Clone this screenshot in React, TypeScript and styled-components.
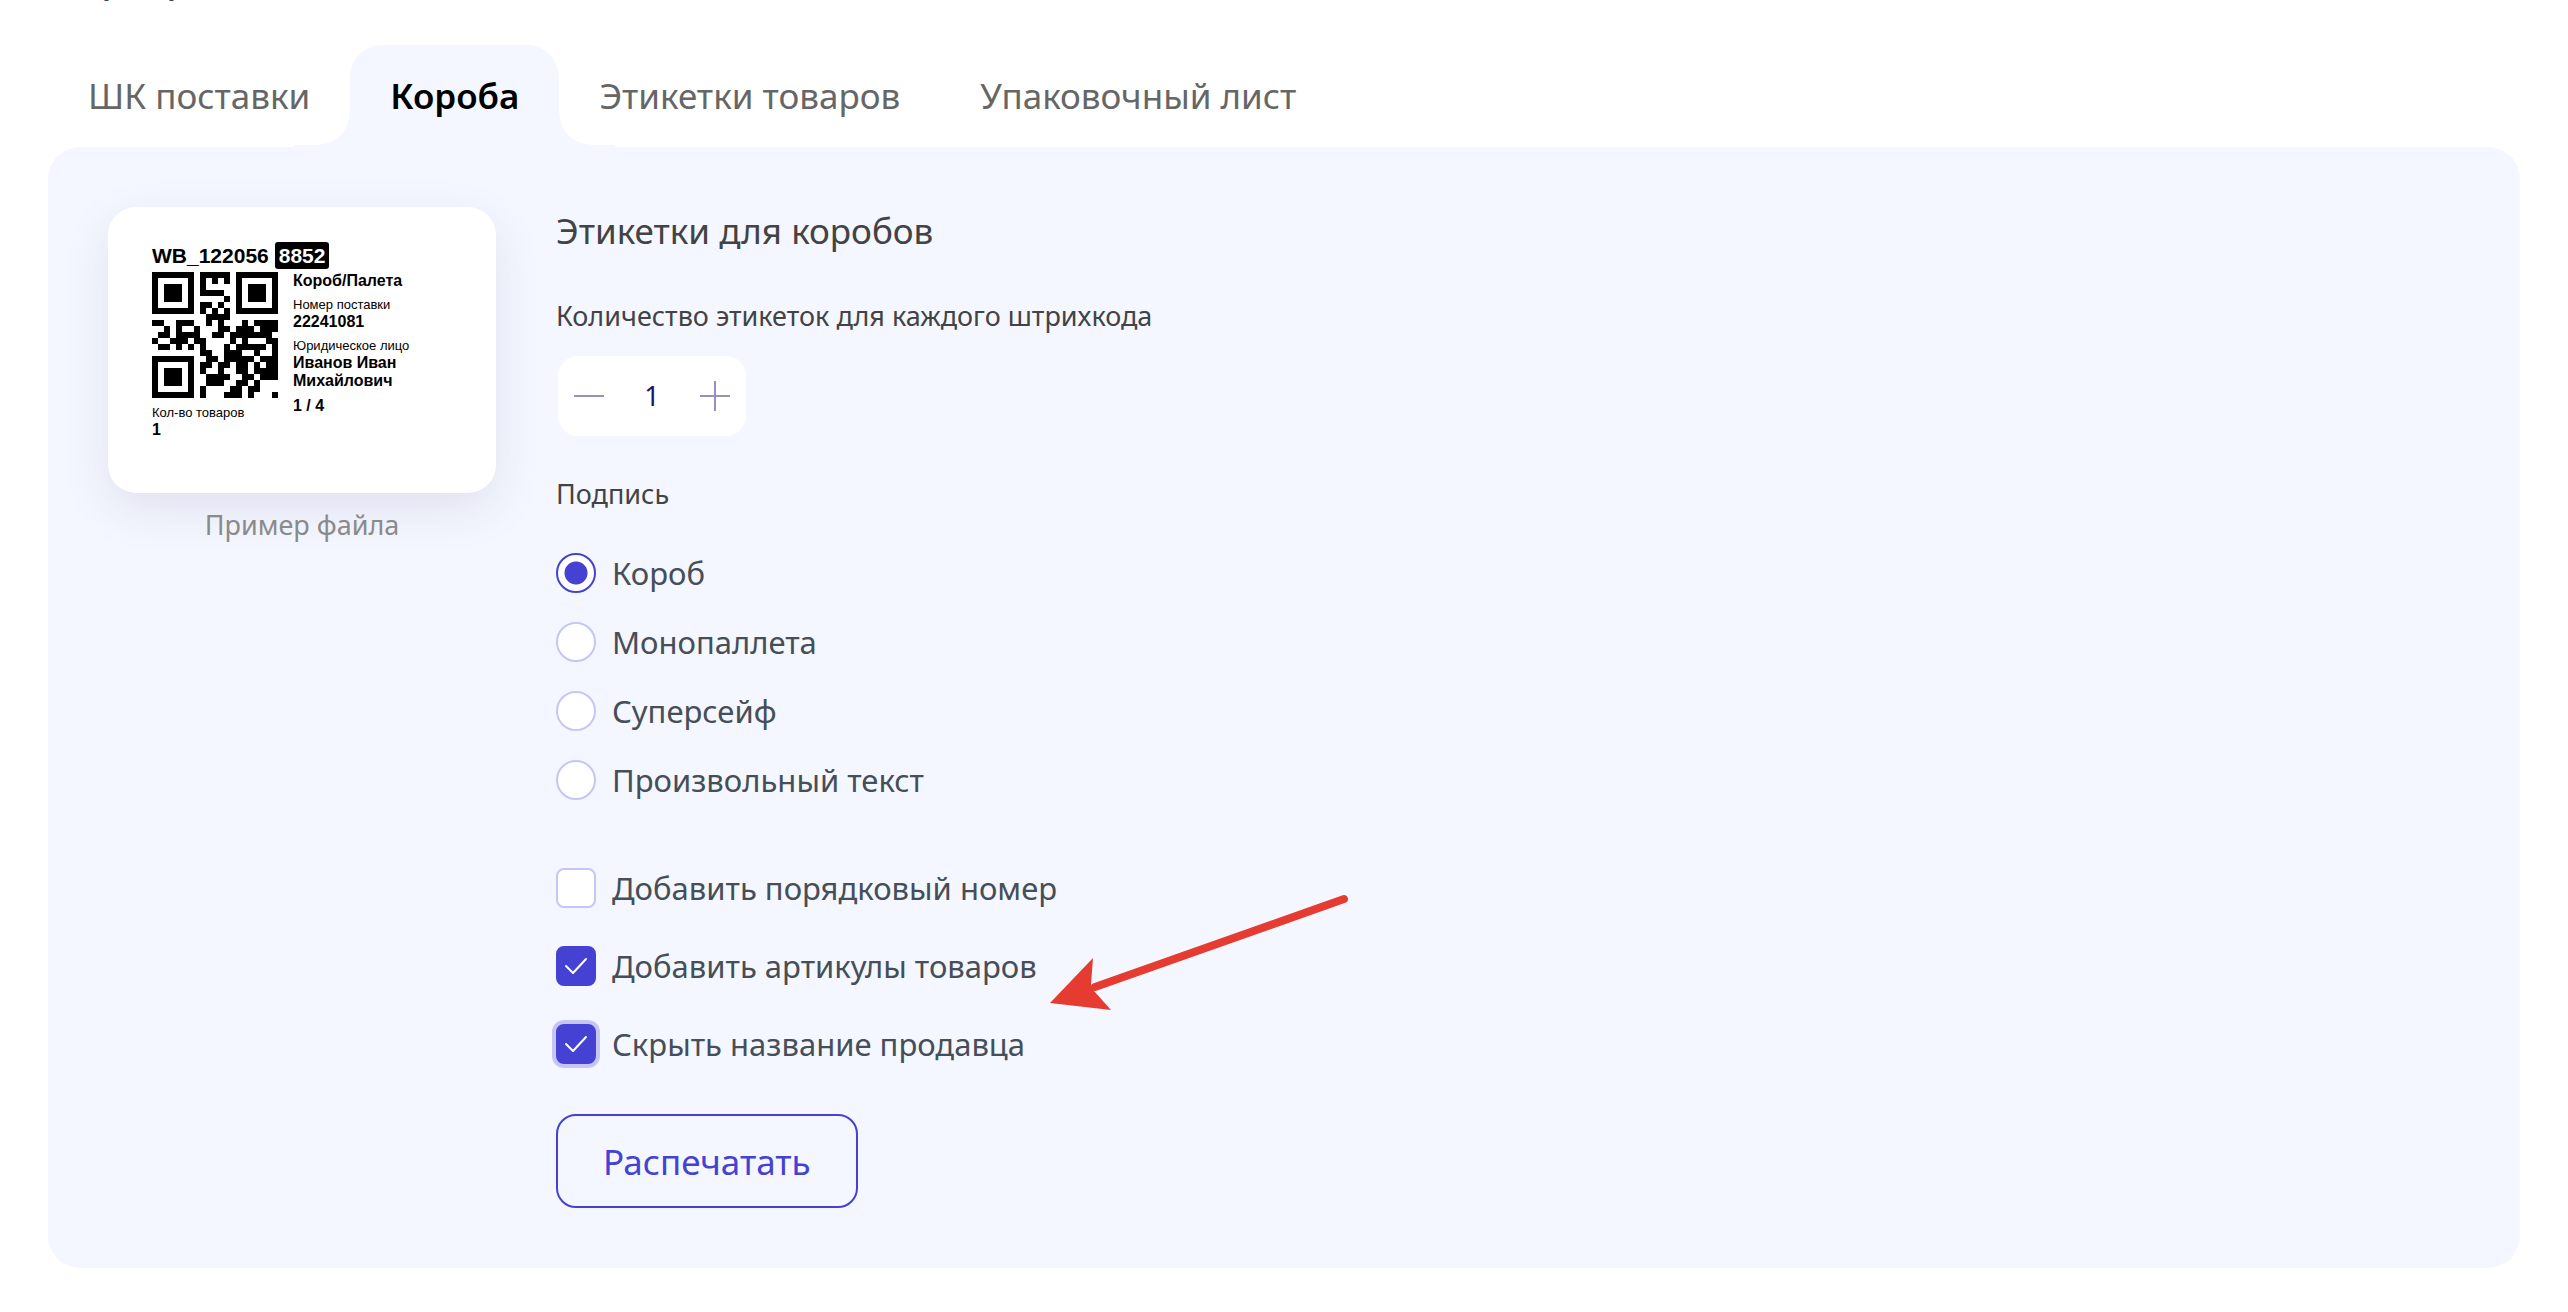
import React, { useState } from "react";
import styled, { createGlobalStyle } from "styled-components";

const accent = "#4542d3";
const accentSoft = "#c6c6f6";
const panelColor = "#f4f7ff";
const textColor = "#434343";
const uiFont = '"Noto Sans", "Open Sans", sans-serif';

const GlobalStyle = createGlobalStyle`
  * { box-sizing: border-box; }
  body {
    margin: 0;
    background: #fff;
    font-family: ${uiFont};
    color: ${textColor};
    overflow-x: hidden;
  }
`;

const Page = styled.main`
  padding: 0 48px 44px;
  overflow: hidden;
`;

const Title = styled.h1`
  margin: -45px 0 42px;
  font-size: 36px;
  line-height: 48px;
  font-weight: 500;
`;

const Tabs = styled.div`
  display: flex;
`;

const Tab = styled.button<{ $active: boolean }>`
  position: relative;
  height: 102px;
  padding: 0 40px;
  border: 0;
  border-radius: 32px 32px 0 0;
  background: ${(p) => (p.$active ? panelColor : "transparent")};
  color: ${(p) => (p.$active ? "#000" : "#666")};
  font-family: inherit;
  font-size: 35px;
  line-height: 48px;
  font-weight: ${(p) => (p.$active ? 600 : 400)};
  white-space: nowrap;
  cursor: pointer;

  &::before,
  &::after {
    content: "";
    display: ${(p) => (p.$active ? "block" : "none")};
    position: absolute;
    bottom: 0;
    width: 56px;
    height: 34px;
    background-repeat: no-repeat;
  }
  &::before {
    right: 100%;
    background-image: radial-gradient(circle at 0 0, transparent 31px, ${panelColor} 32px),
      linear-gradient(${panelColor}, ${panelColor});
    background-size: 32px 34px, 56px 2px;
    background-position: right top, left bottom;
  }
  &::after {
    left: 100%;
    background-image: radial-gradient(circle at 100% 0, transparent 31px, ${panelColor} 32px),
      linear-gradient(${panelColor}, ${panelColor});
    background-size: 32px 34px, 56px 2px;
    background-position: left top, left bottom;
  }
`;

const Panel = styled.section`
  display: flex;
  align-items: flex-start;
  gap: 60px;
  padding: 60px;
  border-radius: 32px;
  background: ${panelColor};
`;

const Preview = styled.figure`
  flex: 0 0 388px;
  margin: 0;
`;

const Caption = styled.figcaption`
  margin-top: 12px;
  font-size: 27px;
  line-height: 40px;
  text-align: center;
  color: #8a8a8a;
`;

const Sticker = styled.div`
  height: 286px;
  padding: 35px 44px;
  border-radius: 28px;
  background: #fff;
  box-shadow: 0 16px 48px rgba(60, 30, 100, 0.1);
  font-family: "Liberation Sans", Arial, sans-serif;
  color: #000;
`;

const StickerCode = styled.div`
  display: flex;
  align-items: center;
  gap: 6px;
  font-size: 21px;
  line-height: 27px;
  font-weight: 700;
`;

const CodeTail = styled.span`
  padding: 0 4px;
  border-radius: 3px;
  background: #000;
  color: #fff;
`;

const StickerBody = styled.div`
  display: flex;
  gap: 15px;
  padding-top: 3px;
`;

const StickerColumn = styled.div`
  display: flex;
  flex-direction: column;
`;

const QrDrawing = styled.svg`
  display: block;
  width: 126px;
  height: 126px;
  margin-bottom: 7px;
`;

const Small = styled.span`
  font-size: 13px;
  line-height: 16px;
`;

const Strong = styled.span<{ $gap?: boolean }>`
  font-size: 16px;
  line-height: 18px;
  font-weight: 700;
  margin-bottom: ${(p) => (p.$gap ? 7 : 0)}px;
`;

const Form = styled.form`
  position: relative;
  flex: 1;
  display: flex;
  flex-direction: column;
  align-items: flex-start;
`;

const Heading = styled.h2`
  margin: 0 0 41px;
  font-size: 35px;
  line-height: 48px;
  font-weight: 400;
`;

const FieldLabel = styled.label`
  font-size: 27px;
  line-height: 40px;
`;

const Stepper = styled.div`
  display: flex;
  align-items: center;
  width: 188px;
  height: 80px;
  margin: 20px 2px 38px;
  padding: 0 16px;
  border-radius: 20px;
  background: #fff;
`;

const StepButton = styled.button`
  display: flex;
  padding: 0;
  border: 0;
  background: none;
  color: #9490c0;
  cursor: pointer;
`;

const StepValue = styled.input`
  flex: 1;
  min-width: 0;
  padding: 0;
  border: 0;
  outline: 0;
  background: none;
  font-family: inherit;
  font-size: 27px;
  line-height: 40px;
  text-align: center;
  color: #1c1268;
`;

const Group = styled.fieldset`
  display: flex;
  flex-direction: column;
  gap: 29px;
  margin: 0 0 68px;
  padding: 0;
  border: 0;
`;

const Legend = styled.legend`
  margin-bottom: 39px;
  padding: 0;
  font-size: 27px;
  line-height: 40px;
`;

const Checks = styled.div`
  display: flex;
  flex-direction: column;
  gap: 38px;
  margin-bottom: 50px;
`;

const Option = styled.label`
  display: flex;
  align-items: center;
  gap: 16px;
  font-size: 31px;
  line-height: 40px;
  color: #464e57;
  white-space: nowrap;
  cursor: pointer;
`;

const Radio = styled.input`
  appearance: none;
  width: 40px;
  height: 40px;
  margin: 0;
  border: 2px solid ${accentSoft};
  border-radius: 50%;
  background: #fff;

  &:checked {
    border-color: ${accent};
    background: radial-gradient(circle, ${accent} 11px, #fff 12px);
  }
`;

const CheckHolder = styled.span`
  display: grid;
  place-items: center;

  > * {
    grid-area: 1 / 1;
  }
  > svg {
    pointer-events: none;
  }
`;

const CheckBox = styled.input<{ $ring: boolean }>`
  appearance: none;
  width: 40px;
  height: 40px;
  margin: 0;
  border: 2px solid ${accentSoft};
  border-radius: 8px;
  background: #fff;
  box-shadow: ${(p) => (p.$ring ? `0 0 0 4px ${accentSoft}` : "none")};

  &:checked {
    border-color: ${accent};
    background: ${accent};
  }
`;

const PrintButton = styled.button`
  height: 94px;
  padding: 2px 45px 0;
  border: 2px solid ${accent};
  border-radius: 20px;
  background: transparent;
  font-family: inherit;
  font-size: 35px;
  line-height: 48px;
  color: ${accent};
  cursor: pointer;
`;

const Arrow = styled.svg`
  position: absolute;
  left: 492px;
  top: 684px;
  pointer-events: none;
`;

const qrRows = [
  "111111101111101111111",
  "100000101010101000001",
  "101110101000001011101",
  "101110101111001011101",
  "101110100000101011101",
  "100000101101001000001",
  "111111101010101111111",
  "000000000111100000000",
  "110011100101000101111",
  "001010010001101110111",
  "011011110011011111110",
  "100111011000010100011",
  "011010101000101111101",
  "000000001100111001001",
  "111111100110111110111",
  "100000101101101101011",
  "101110101001001101111",
  "101110100111100110111",
  "101110100111001101000",
  "100000101000011011000",
  "111111101000111010001",
];

const qrPath = qrRows
  .map((row, y) => [...row].map((c, x) => (c === "1" ? `M${x} ${y}h1v1h-1z` : "")).join(""))
  .join("");

const tabs = ["ШК поставки", "Короба", "Этикетки товаров", "Упаковочный лист"];
const captions = ["Короб", "Монопаллета", "Суперсейф", "Произвольный текст"];
const extras = ["Добавить порядковый номер", "Добавить артикулы товаров", "Скрыть название продавца"];

export default function App() {
  const [tab, setTab] = useState(1);
  const [count, setCount] = useState(1);
  const [caption, setCaption] = useState(0);
  const [checked, setChecked] = useState([false, true, true]);
  const [lastTouched, setLastTouched] = useState(2);

  const toggle = (index: number) => {
    setChecked(checked.map((value, i) => (i === index ? !value : value)));
    setLastTouched(index);
  };

  return (
    <Page>
      <GlobalStyle />
      <Title>Маркировка</Title>
      <Tabs role="tablist">
        {tabs.map((name, i) => (
          <Tab key={name} role="tab" aria-selected={i === tab} $active={i === tab} onClick={() => setTab(i)}>
            {name}
          </Tab>
        ))}
      </Tabs>
      <Panel>
        <Preview>
          <Sticker>
            <StickerCode>
              WB_122056<CodeTail>8852</CodeTail>
            </StickerCode>
            <StickerBody>
              <StickerColumn>
                <QrDrawing viewBox="0 0 21 21" shapeRendering="crispEdges" aria-hidden="true">
                  <path d={qrPath} />
                </QrDrawing>
                <Small>Кол-во товаров</Small>
                <Strong>1</Strong>
              </StickerColumn>
              <StickerColumn>
                <Strong $gap>Короб/Палета</Strong>
                <Small>Номер поставки</Small>
                <Strong $gap>22241081</Strong>
                <Small>Юридическое лицо</Small>
                <Strong>Иванов Иван</Strong>
                <Strong $gap>Михайлович</Strong>
                <Strong>1 / 4</Strong>
              </StickerColumn>
            </StickerBody>
          </Sticker>
          <Caption>Пример файла</Caption>
        </Preview>
        <Form onSubmit={(e) => e.preventDefault()}>
          <Heading>Этикетки для коробов</Heading>
          <FieldLabel htmlFor="count">Количество этикеток для каждого штрихкода</FieldLabel>
          <Stepper>
            <StepButton type="button" aria-label="Меньше" onClick={() => setCount(Math.max(1, count - 1))}>
              <svg width="30" height="30" viewBox="0 0 30 30" fill="none" stroke="currentColor" strokeWidth="2">
                <path d="M0 15h30" />
              </svg>
            </StepButton>
            <StepValue
              id="count"
              inputMode="numeric"
              value={count}
              onChange={(e) => setCount(Number(e.target.value) || 1)}
            />
            <StepButton type="button" aria-label="Больше" onClick={() => setCount(count + 1)}>
              <svg width="30" height="30" viewBox="0 0 30 30" fill="none" stroke="currentColor" strokeWidth="2">
                <path d="M0 15h30M15 0v30" />
              </svg>
            </StepButton>
          </Stepper>
          <Group>
            <Legend>Подпись</Legend>
            {captions.map((name, i) => (
              <Option key={name}>
                <Radio type="radio" name="caption" checked={i === caption} onChange={() => setCaption(i)} />
                {name}
              </Option>
            ))}
          </Group>
          <Checks>
            {extras.map((name, i) => (
              <Option key={name}>
                <CheckHolder>
                  <CheckBox
                    type="checkbox"
                    checked={checked[i]}
                    $ring={i === lastTouched}
                    onChange={() => toggle(i)}
                  />
                  {checked[i] && (
                    <svg width="40" height="40" viewBox="0 0 40 40" fill="none" stroke="#fff" strokeWidth="2">
                      <path d="M10 20l7 7L30 13" strokeLinecap="round" strokeLinejoin="round" />
                    </svg>
                  )}
                </CheckHolder>
                {name}
              </Option>
            ))}
          </Checks>
          <PrintButton type="submit">Распечатать</PrintButton>
          <Arrow width="304" height="124" viewBox="0 0 304 124" aria-hidden="true">
            <path d="M47 96L296 8" stroke="#e53b30" strokeWidth="8" strokeLinecap="round" />
            <path d="M2 112L45 67L43 93L46 100L63 119Z" fill="#e53b30" />
          </Arrow>
        </Form>
      </Panel>
    </Page>
  );
}
